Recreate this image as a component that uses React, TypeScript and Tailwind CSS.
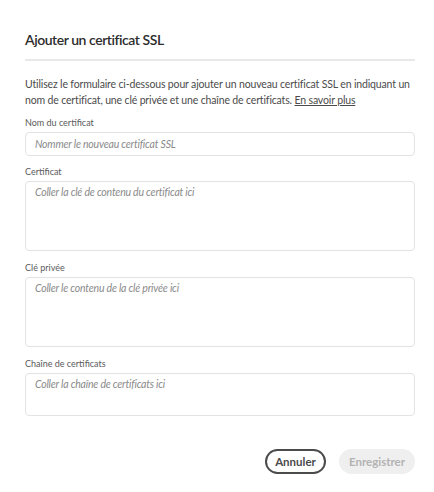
export default function App() {
  return (
    <div className="w-[434px] h-[492px] bg-white font-['Lato','Open_Sans',sans-serif]">
      <div className="px-[25px] pt-[29px]">
        <h1 className="text-[14px] leading-[22px] text-[#2c2c2c] font-semibold tracking-[-0.45px]">
          Ajouter un certificat SSL
        </h1>
        <div className="mt-[8px] h-[2px] w-[390px] bg-[#e8e8e8]" />

        <p className="mt-[15px] text-[10.5px] leading-[16px] text-[#4b4b4b] tracking-[-0.15px] whitespace-nowrap">
          Utilisez le formulaire ci-dessous pour ajouter un nouveau certificat SSL en indiquant un
          <br />
          nom de certificat, une clé privée et une chaîne de certificats.{' '}
          <a href="#" className="underline">
            En savoir plus
          </a>
        </p>

        <form className="mt-[8px] w-[390px]">
          <Field label="Nom du certificat" spacing="mb-[9px]">
            <input
              type="text"
              placeholder="Nommer le nouveau certificat SSL"
              className="block w-full h-[24px] rounded-[4px] border border-[#e3e3e3] px-[9px] text-[10.5px] italic tracking-[-0.2px] placeholder:text-[#8a8a8a] focus:outline-none"
            />
          </Field>
          <Field label="Certificat" spacing="mb-[10px]">
            <textarea
              placeholder="Coller la clé de contenu du certificat ici"
              className="block w-full h-[70px] resize-none rounded-[4px] border border-[#e3e3e3] px-[9px] py-[3px] text-[10.5px] italic tracking-[-0.2px] placeholder:text-[#8a8a8a] focus:outline-none"
            />
          </Field>
          <Field label="Clé privée" spacing="mb-[10px]">
            <textarea
              placeholder="Coller le contenu de la clé privée ici"
              className="block w-full h-[70px] resize-none rounded-[4px] border border-[#e3e3e3] px-[9px] py-[3px] text-[10.5px] italic tracking-[-0.2px] placeholder:text-[#8a8a8a] focus:outline-none"
            />
          </Field>
          <Field label="Chaîne de certificats" spacing="mb-0">
            <textarea
              placeholder="Coller la chaîne de certificats ici"
              className="block w-full h-[43px] resize-none rounded-[4px] border border-[#e3e3e3] px-[9px] py-[3px] text-[10.5px] italic tracking-[-0.2px] placeholder:text-[#8a8a8a] focus:outline-none"
            />
          </Field>

          <div className="mt-[33px] flex justify-end gap-[13px]">
            <button
              type="button"
              className="h-[25px] w-[61px] rounded-full border-2 border-[#4b4b4b] text-[11.5px] font-bold text-[#4b4b4b]"
            >
              Annuler
            </button>
            <button
              type="submit"
              disabled
              className="h-[25px] w-[76px] rounded-full bg-[#efefef] text-[11.5px] font-bold text-[#b3b3b3]"
            >
              Enregistrer
            </button>
          </div>
        </form>
      </div>
    </div>
  );
}

function Field({ label, spacing, children }: { label: string; spacing: string; children: React.ReactNode }) {
  return (
    <div className={spacing}>
      <label className="block text-[9px] leading-[14px] text-[#5a5a5a] mb-[2px]">{label}</label>
      {children}
    </div>
  );
}
